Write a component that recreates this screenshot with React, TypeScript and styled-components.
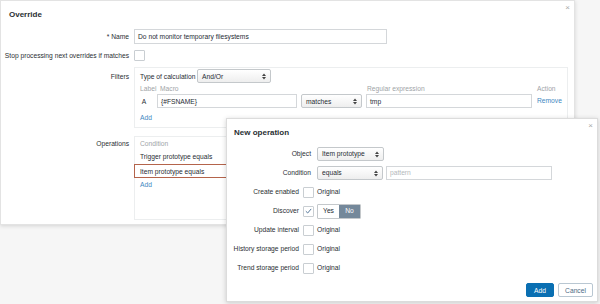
import styled, { createGlobalStyle } from 'styled-components';

const GlobalStyle = createGlobalStyle`
  html, body {
    margin: 0;
    padding: 0;
  }
  body {
    background: #f6f6f6;
    font-family: 'Liberation Sans', Arial, sans-serif;
    font-size: 6.7px;
    color: #1f2c33;
  }
  * {
    box-sizing: border-box;
  }
`;

const Page = styled.div`
  position: relative;
  width: 600px;
  height: 304px;
  overflow: hidden;
`;

const Dialog = styled.div`
  width: 575px;
  height: 225px;
  background: #fff;
  border: 1px solid #e3e3e3;
  box-shadow: 0 1px 4px rgba(0, 0, 0, 0.14);
  display: flex;
  flex-direction: column;
`;

const PopupDialog = styled(Dialog)`
  position: absolute;
  left: 226px;
  top: 118px;
  width: 372px;
  height: 184px;
  border-color: #dcdcdc;
  box-shadow: 0 1px 5px rgba(0, 0, 0, 0.18);
`;

const Header = styled.div<{ $height: number; $padLeft: number }>`
  height: ${(p) => p.$height}px;
  display: flex;
  align-items: center;
  justify-content: space-between;
  padding-left: ${(p) => p.$padLeft}px;
  padding-right: 4px;
`;

const Title = styled.span`
  font-size: 8px;
  font-weight: bold;
  color: #2a2f33;
`;

const Close = styled.span`
  align-self: flex-start;
  margin-top: 2px;
  font-size: 8px;
  color: #a8a8a8;
`;

const Form = styled.div`
  display: grid;
  grid-template-columns: 128px 1fr;
  column-gap: 5px;
  row-gap: 4px;
  padding: 2px 8px 0 0;
`;

const Label = styled.div<{ $top?: number; $offset?: number }>`
  text-align: right;
  line-height: 15px;
  color: #2b2f33;
  align-self: start;
  padding-top: ${(p) => p.$top ?? 0}px;
  margin-top: ${(p) => p.$offset ?? 0}px;
  white-space: nowrap;
`;

const Field = styled.div`
  display: flex;
  align-items: center;
  min-height: 15px;
  gap: 3px;
`;

const TextBox = styled.div<{ $w: number; $h?: number; $placeholder?: boolean }>`
  width: ${(p) => p.$w}px;
  height: ${(p) => p.$h ?? 14}px;
  border: 1px solid #d4d7da;
  background: #fff;
  padding-left: 3px;
  display: flex;
  align-items: center;
  color: ${(p) => (p.$placeholder ? '#b4b8bb' : '#1f2c33')};
  white-space: nowrap;
`;

const SelectBox = styled.div<{ $w: number }>`
  width: ${(p) => p.$w}px;
  height: 14px;
  border: 1px solid #c4c8cb;
  border-radius: 2px;
  background: linear-gradient(#ffffff, #eeeeee);
  padding: 0 4px 0 4px;
  display: flex;
  align-items: center;
  justify-content: space-between;
  white-space: nowrap;
`;

const Check = styled.div`
  width: 11px;
  height: 11px;
  border: 1px solid #c9ced2;
  border-radius: 1px;
  background: #fff;
  display: flex;
  align-items: center;
  justify-content: center;
`;

const Section = styled.div<{ $h: number; $offset?: number; $padTop?: number }>`
  border: 1px solid #eceeef;
  height: ${(p) => p.$h}px;
  margin-top: ${(p) => p.$offset ?? 0}px;
  padding: ${(p) => p.$padTop ?? 1}px 5px 1px 5px;
`;

const CalcRow = styled.div`
  display: flex;
  align-items: center;
  height: 14px;
`;

const CalcLabel = styled.span`
  width: 57px;
`;

const FilterTable = styled.div`
  display: grid;
  grid-template-columns: 17px 144px 65px 171px auto;
  align-items: center;
`;

const Head = styled.span<{ $pad?: number }>`
  color: #a0a4a7;
  line-height: 11px;
  padding-left: ${(p) => p.$pad ?? 0}px;
  white-space: nowrap;
`;

const Cell = styled.div`
  height: 14px;
  display: flex;
  align-items: center;
`;

const Link = styled.span<{ $top?: number }>`
  color: #3f88bf;
  display: block;
  line-height: 10px;
  margin-top: ${(p) => p.$top ?? 0}px;
`;

const OpLine = styled.div<{ $h: number; $gray?: boolean }>`
  line-height: ${(p) => p.$h}px;
  color: ${(p) => (p.$gray ? '#a0a4a7' : '#1f2c33')};
  white-space: nowrap;
`;

const HighlightRow = styled.div`
  margin-left: -6px;
  height: 14px;
  border: 1px solid #b4644b;
  padding-left: 5px;
  display: flex;
  align-items: center;
  width: 120px;
`;

const PopForm = styled.div`
  display: grid;
  grid-template-columns: 72px 18px 1fr;
  grid-auto-rows: 14px;
  row-gap: 5px;
  padding-top: 2px;
`;

const PopLabel = styled.div<{ $wide?: boolean }>`
  grid-column: ${(p) => (p.$wide ? '1 / 3' : '1 / 2')};
  text-align: right;
  padding-right: ${(p) => (p.$wide ? 6 : 0)}px;
  line-height: 14px;
  white-space: nowrap;
  color: #2b2f33;
`;

const CheckCell = styled.div`
  display: flex;
  align-items: center;
  padding-left: 4px;
`;

const PopField = styled.div`
  grid-column: 3;
  display: flex;
  align-items: center;
  gap: 3px;
  line-height: 14px;
`;

const Toggle = styled.div`
  display: flex;
  height: 15px;
  border: 1px solid #c4c8cb;
  border-radius: 1px;
  overflow: hidden;
`;

const ToggleOption = styled.div<{ $active?: boolean }>`
  width: 21px;
  display: flex;
  align-items: center;
  justify-content: center;
  background: ${(p) => (p.$active ? '#74889a' : '#fff')};
  color: ${(p) => (p.$active ? '#fff' : '#1f2c33')};
`;

const Footer = styled.div`
  margin-top: auto;
  display: flex;
  justify-content: flex-end;
  gap: 4px;
  padding: 0 4px 4px 0;
`;

const Button = styled.div<{ $primary?: boolean }>`
  height: 14px;
  padding: 0 ${(p) => (p.$primary ? 7 : 6)}px;
  min-width: ${(p) => (p.$primary ? 25 : 35)}px;
  border-radius: 2px;
  display: flex;
  align-items: center;
  justify-content: center;
  background: ${(p) => (p.$primary ? '#0a6fb2' : '#fff')};
  color: ${(p) => (p.$primary ? '#fff' : '#4c6a85')};
  border: 1px solid ${(p) => (p.$primary ? '#0a6fb2' : '#b9c7d2')};
`;

function Arrows() {
  return (
    <svg width="4" height="7" viewBox="0 0 4 7">
      <path d="M0 3 L2 0.5 L4 3 Z M0 4 L2 6.5 L4 4 Z" fill="#444" />
    </svg>
  );
}

function Select(props: { width: number; value: string }) {
  return (
    <SelectBox $w={props.width}>
      <span>{props.value}</span>
      <Arrows />
    </SelectBox>
  );
}

function Tick() {
  return (
    <svg width="7" height="6" viewBox="0 0 7 6">
      <path d="M0.8 3.2 L2.7 5 L6.2 0.9" fill="none" stroke="#56789a" strokeWidth="1" />
    </svg>
  );
}

function OriginalRow(props: { label: string }) {
  return (
    <>
      <PopLabel>{props.label}</PopLabel>
      <CheckCell>
        <Check />
      </CheckCell>
      <PopField>Original</PopField>
    </>
  );
}

const checkRows = ['Update interval', 'History storage period', 'Trend storage period'];

export default function App() {
  return (
    <Page>
      <GlobalStyle />
      <Dialog>
        <Header $height={26} $padLeft={8}>
          <Title>Override</Title>
          <Close>×</Close>
        </Header>
        <Form>
          <Label>* Name</Label>
          <Field>
            <TextBox $w={253} $h={15}>Do not monitor temporary filesystems</TextBox>
          </Field>

          <Label>Stop processing next overrides if matches</Label>
          <Field>
            <Check />
          </Field>

          <Label $top={2}>Filters</Label>
          <Section $h={61}>
            <CalcRow>
              <CalcLabel>Type of calculation</CalcLabel>
              <Select width={74} value="And/Or" />
            </CalcRow>
            <FilterTable>
              <Head>Label</Head>
              <Head $pad={3}>Macro</Head>
              <span />
              <Head $pad={1}>Regular expression</Head>
              <Head>Action</Head>
              <Cell>&nbsp;A</Cell>
              <Cell>
                <TextBox $w={140}>{'{#FSNAME}'}</TextBox>
              </Cell>
              <Cell>
                <Select width={61} value="matches" />
              </Cell>
              <Cell>
                <TextBox $w={166}>tmp</TextBox>
              </Cell>
              <Cell>
                <Link>Remove</Link>
              </Cell>
            </FilterTable>
            <Link $top={5}>Add</Link>
          </Section>

          <Label $offset={4}>Operations</Label>
          <Section $h={84} $offset={4} $padTop={1}>
            <OpLine $h={12} $gray>
              Condition
            </OpLine>
            <OpLine $h={14}>Trigger prototype equals</OpLine>
            <HighlightRow>Item prototype equals</HighlightRow>
            <Link $top={2}>Add</Link>
          </Section>
        </Form>
      </Dialog>

      <PopupDialog>
        <Header $height={26} $padLeft={7}>
          <Title>New operation</Title>
          <Close>×</Close>
        </Header>
        <PopForm>
          <PopLabel $wide>Object</PopLabel>
          <PopField>
            <Select width={67} value="Item prototype" />
          </PopField>

          <PopLabel $wide>Condition</PopLabel>
          <PopField>
            <Select width={66} value="equals" />
            <TextBox $w={166} $placeholder>
              pattern
            </TextBox>
          </PopField>

          <OriginalRow label="Create enabled" />

          <PopLabel>Discover</PopLabel>
          <CheckCell>
            <Check>
              <Tick />
            </Check>
          </CheckCell>
          <PopField>
            <Toggle>
              <ToggleOption>Yes</ToggleOption>
              <ToggleOption $active>No</ToggleOption>
            </Toggle>
          </PopField>

          {checkRows.map((row) => (
            <OriginalRow key={row} label={row} />
          ))}
        </PopForm>
        <Footer>
          <Button $primary>Add</Button>
          <Button>Cancel</Button>
        </Footer>
      </PopupDialog>
    </Page>
  );
}
